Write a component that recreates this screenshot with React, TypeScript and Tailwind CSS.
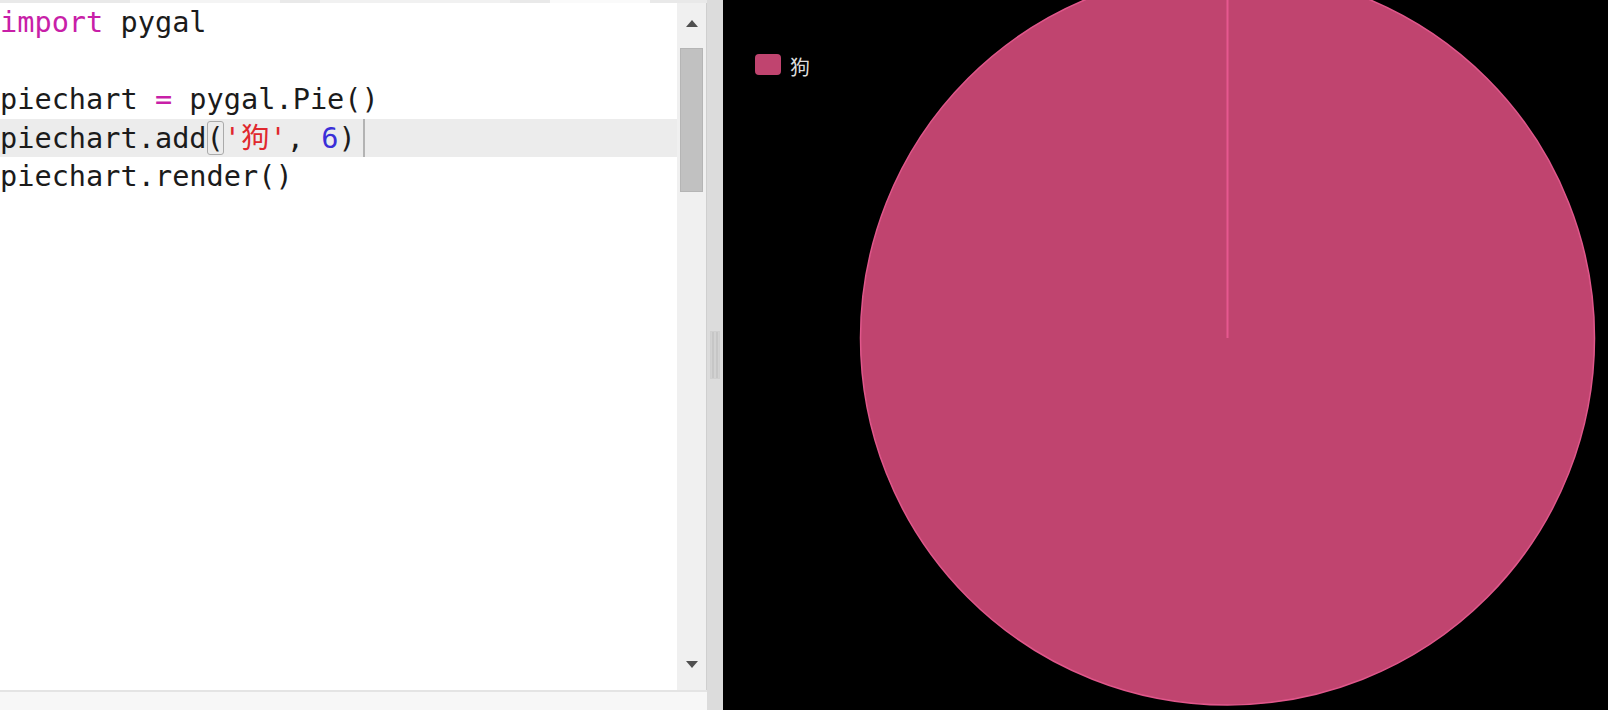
import React from "react";

const mono = { fontFamily: '"DejaVu Sans Mono", "Liberation Mono", "Noto Sans CJK SC", monospace' };

const CodeLine = ({ children, active }: { children?: React.ReactNode; active?: boolean }) => (
  <div className={`relative h-[38.6px] whitespace-pre leading-[38.6px] ${active ? "bg-[#ececec]" : ""}`}>
    {children}
  </div>
);

const Editor = () => (
  <div className="flex h-full w-[707px] flex-col bg-white">
    {/* tab strip remnants at the top */}
    <div className="flex h-[3px] shrink-0 bg-[#e9e9e9]">
      <div className="ml-[130px] h-full w-[150px] bg-[#f4f4f4]" />
      <div className="ml-[40px] h-full w-[190px] bg-[#f1f1f1]" />
      <div className="ml-[40px] h-full w-[100px] bg-[#fafafa]" />
    </div>
    <div className="flex min-h-0 flex-1">
      <div className="relative flex-1 text-[28.6px] text-[#1b1b1b]" style={mono}>
        <CodeLine>
          <span className="text-[#c81fa8]">import</span> pygal
        </CodeLine>
        <CodeLine />
        <CodeLine>
          piechart <span className="text-[#c81fa8]">=</span> pygal.Pie()
        </CodeLine>
        <CodeLine active>
          piechart.add<span className="rounded-[3px] outline outline-1 -outline-offset-1 outline-[#aaaaaa]">(</span>
          <span className="text-[#e0282e]">'狗'</span>, <span className="text-[#3a2fd8]">6</span>)
          <span className="absolute left-[363px] top-0 h-full w-[2px] bg-[#b3b3b3]" />
        </CodeLine>
        <CodeLine>piechart.render()</CodeLine>
      </div>
      {/* vertical scrollbar */}
      <div className="flex w-[30px] flex-col items-center border-r border-[#cfcfcf] bg-[#f0f0f0]">
        <div className="flex h-[45px] items-center justify-center pb-[4px]">
          <div className="h-0 w-0 border-x-[6px] border-b-[7px] border-x-transparent border-b-[#505050]" />
        </div>
        <div className="h-[144px] w-[23px] border border-[#b5b5b5] bg-[#c1c1c1]" />
        <div className="flex-1" />
        <div className="flex h-[30px] items-start justify-center pt-[1px]">
          <div className="h-0 w-0 border-x-[6px] border-t-[7px] border-x-transparent border-t-[#505050]" />
        </div>
      </div>
    </div>
    <div className="h-[20px] shrink-0 border-t-2 border-[#e4e4e4] bg-[#f7f7f7]" />
  </div>
);

const Splitter = () => (
  <div className="flex h-full w-[16px] items-center justify-center bg-[#dcdcdc]">
    <div className="flex h-[48px] w-[10px] gap-[2px] border border-[#cfcfcf] bg-[#d2d2d2] px-[1px]">
      <div className="h-full w-[2px] bg-[#c6c6c6]" />
      <div className="h-full w-[2px] bg-[#c6c6c6]" />
    </div>
  </div>
);

const Chart = () => (
  <div className="relative h-full flex-1 overflow-hidden bg-black">
    <svg className="absolute left-0 top-0" width="885" height="710" viewBox="0 0 885 710">
      <circle cx="504.5" cy="338" r="367" fill="#c0446f" stroke="#e0578b" strokeWidth="1.5" />
      <line x1="504.5" y1="-30" x2="504.5" y2="338" stroke="#e6588f" strokeWidth="2" />
    </svg>
    <div className="absolute left-[32px] top-[54px] flex items-start gap-[9px]">
      <div className="h-[21px] w-[26px] rounded-[4px] bg-[#c0446f]" />
      <span
        className="mt-[3px] text-[20px] leading-none text-[#dddddd]"
        style={{ fontFamily: '"Noto Sans CJK SC", "Noto Sans", sans-serif' }}
      >
        狗
      </span>
    </div>
  </div>
);

export default function App() {
  return (
    <div className="flex h-[710px] w-[1608px] overflow-hidden">
      <Editor />
      <Splitter />
      <Chart />
    </div>
  );
}
